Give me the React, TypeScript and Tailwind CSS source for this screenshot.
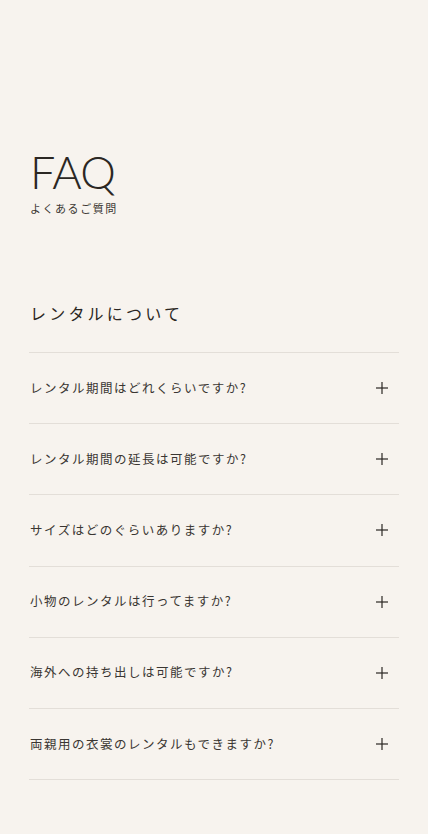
import React from "react";

const questions = [
  "レンタル期間はどれくらいですか?",
  "レンタル期間の延長は可能ですか?",
  "サイズはどのぐらいありますか?",
  "小物のレンタルは行ってますか?",
  "海外への持ち出しは可能ですか?",
  "両親用の衣裳のレンタルもできますか?",
];

const jp = { fontFamily: '"Noto Sans CJK JP", "Noto Sans", sans-serif' };

const Plus = () => (
  <svg width="14" height="14" viewBox="0 0 14 14" fill="none" stroke="#2b2723" strokeWidth="1.2">
    <line x1="7" y1="1" x2="7" y2="13" />
    <line x1="1" y1="7" x2="13" y2="7" />
  </svg>
);

const App = () => {
  return (
    <div className="min-h-screen bg-[#f7f3ee] text-[#2b2723]">
      <div className="px-[29px] pt-[150px] pb-[55px]">
        {/* Title */}
        <div
          className="pl-[1px] text-[45px] font-light leading-none tracking-[-0.015em]"
          style={{ fontFamily: 'Lato, "Open Sans", sans-serif' }}
        >
          FAQ
        </div>
        <div className="mt-[5px] pl-[1px] text-[11px] leading-[16px] tracking-[0.14em] text-[#3a3632]" style={jp}>
          よくあるご質問
        </div>

        {/* Section */}
        <div className="mt-[85px] pl-[1px] text-[16px] leading-[24px] tracking-[0.2em]" style={jp}>
          レンタルについて
        </div>

        <div className="mt-[27px] border-t border-[#e3ded8]">
          {questions.map((q) => (
            <div
              key={q}
              className="flex h-[71.2px] items-center justify-between border-b border-[#e3ded8] pl-[1px] pr-[10px]"
            >
              <span className="text-[12.5px] tracking-[0.12em] text-[#3a3632]" style={jp}>
                {q}
              </span>
              <Plus />
            </div>
          ))}
        </div>
      </div>
    </div>
  );
};

export default App;
